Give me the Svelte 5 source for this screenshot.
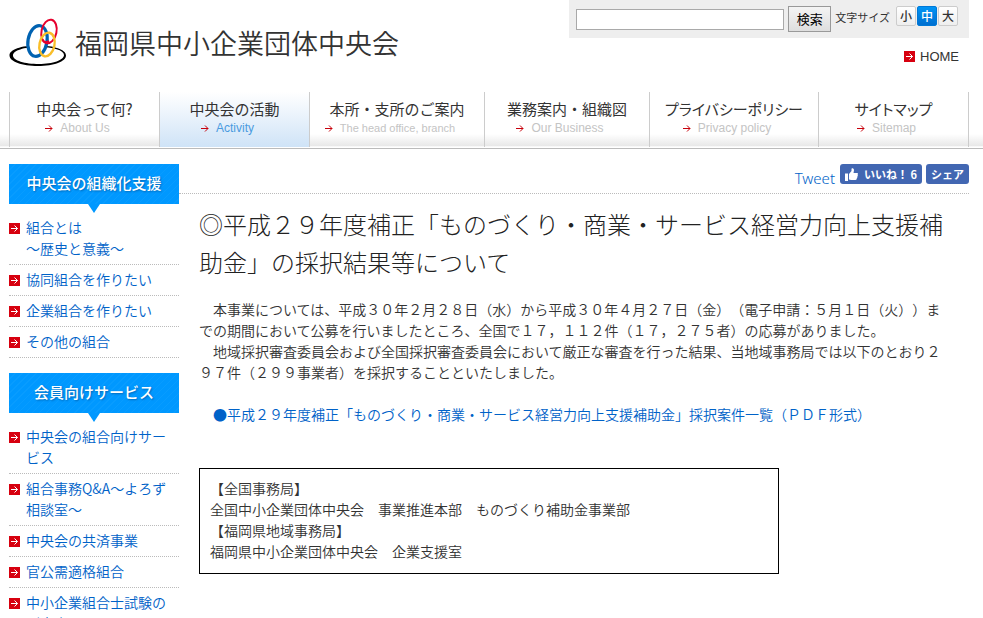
<script lang="ts">
  type NavItem = { label: string; sub: string; active?: boolean; kana?: boolean; long?: boolean };
  type MenuGroup = { title: string; items: string[][] };

  const navItems: NavItem[] = [
    { label: "中央会って何?", sub: "About Us" },
    { label: "中央会の活動", sub: "Activity", active: true },
    { label: "本所・支所のご案内", sub: "The head office, branch", long: true },
    { label: "業務案内・組織図", sub: "Our Business" },
    { label: "プライバシーポリシー", sub: "Privacy policy", kana: true },
    { label: "サイトマップ", sub: "Sitemap", kana: true },
  ];

  const groups: MenuGroup[] = [
    {
      title: "中央会の組織化支援",
      items: [["組合とは", "～歴史と意義～"], ["協同組合を作りたい"], ["企業組合を作りたい"], ["その他の組合"]],
    },
    {
      title: "会員向けサービス",
      items: [
        ["中央会の組合向けサービス"],
        ["組合事務Q&A～よろず相談室～"],
        ["中央会の共済事業"],
        ["官公需適格組合"],
        ["中小企業組合士試験のご案内"],
      ],
    },
  ];

  const sizes = ["小", "中", "大"];
  let size = $state("中");
  let keyword = $state("");
</script>

{#snippet redBox()}
  <svg class="red-box" width="11" height="11" viewBox="0 0 11 11" aria-hidden="true">
    <rect width="11" height="11" fill="#d7000f" />
    <path d="M2 5.5h6.5M5.5 2.5l3 3-3 3" fill="none" stroke="#fff" />
  </svg>
{/snippet}

<header class="header">
  <a class="logo" href="#top">
    <svg width="58" height="50" viewBox="0 0 58 50" aria-hidden="true">
      <path
        fill-rule="evenodd"
        fill="#000"
        d="M28.500 27.500C12 27.500 .500 31.500 .500 37.500S13 48 29 48S57 43.500 57 37.500S45 27.500 28.500 27.500ZM29.500 29C44 29 55 32 55 37S44 46 30 46S4 42.500 4 37.500S15 29 29.500 29Z"
      />
      <ellipse cx="28.500" cy="23" rx="10.500" ry="17" fill="#fff" transform="rotate(10 28.500 23)" />
      <ellipse cx="28.500" cy="23" rx="9.500" ry="15.500" fill="none" stroke="#0062b1" stroke-width="3.200" transform="rotate(10 28.500 23)" />
      <ellipse cx="40" cy="13.500" rx="7.500" ry="12" fill="none" stroke="#e6002d" stroke-width="2" transform="rotate(12 40 13.500)" />
      <ellipse cx="38" cy="26.500" rx="7.500" ry="12" fill="none" stroke="#f9be28" stroke-width="2.400" transform="rotate(12 38 26.500)" />
      <path d="M33.500 21.500c1 2.800 4 3 6.500 1.500" fill="none" stroke="#e6002d" stroke-width="2" />
    </svg>
    <span>福岡県中小企業団体中央会</span>
  </a>
  <div class="tools">
    <form class="search" onsubmit={(e) => e.preventDefault()}>
      <input type="text" aria-label="検索" bind:value={keyword} />
      <button class="submit" type="submit">検索</button>
      <span class="size-label">文字サイズ</span>
      <div class="sizes">
        {#each sizes as s}
          <button type="button" class:active={size === s} onclick={() => (size = s)}>{s}</button>
        {/each}
      </div>
    </form>
    <a class="home" href="#home">{@render redBox()}HOME</a>
  </div>
</header>

<nav class="nav">
  <ul>
    {#each navItems as item}
      <li class:active={item.active}>
        <a href="#nav">
          <span class="label" class:kana={item.kana}>{item.label}</span>
          <span class="sub" class:long={item.long}>
            <svg width="8" height="7" viewBox="0 0 8 7" aria-hidden="true">
              <path d="M0 3.500h7M4 .500l3 3-3 3" fill="none" stroke="#c7000b" />
            </svg>
            {item.sub}
          </span>
        </a>
      </li>
    {/each}
  </ul>
</nav>

<div class="page">
  <aside class="side">
    {#each groups as group}
      <section>
        <h2>{group.title}</h2>
        <ul>
          {#each group.items as lines}
            <li>
              {@render redBox()}
              <a href="#menu">{#each lines as line, i}{#if i > 0}<br />{/if}{line}{/each}</a>
            </li>
          {/each}
        </ul>
      </section>
    {/each}
  </aside>

  <main class="main">
    <div class="social">
      <a class="tweet" href="#tweet">Tweet</a>
      <button type="button">
        <svg width="13" height="13" viewBox="0 0 13 13" aria-hidden="true">
          <path fill="#fff" d="M0 5.500h3V13H0zM4 6l2.500-3V.800C6.500 0 9 0 9 2.200L8.500 5H12c1 0 1.300 1.200.500 1.800.600.600.400 1.500-.300 1.900.4.700.1 1.400-.5 1.700.2.900-.2 1.600-1.200 1.600H6L4 11.500z" />
        </svg>
        いいね！ 6
      </button>
      <button type="button">シェア</button>
    </div>

    <article>
      <h1>◎平成２９年度補正「ものづくり・商業・サービス経営力向上支援補助金」の採択結果等について</h1>
      <p>
        &#12288;本事業については、平成３０年２月２８日（水）から平成３０年４月２７日（金）（電子申請：５月１日（火））までの期間において公募を行いましたところ、全国で１７，１１２件（１７，２７５者）の応募がありました。<br />
        &#12288;地域採択審査委員会および全国採択審査委員会において厳正な審査を行った結果、当地域事務局では以下のとおり２９７件（２９９事業者）を採択することといたしました。
      </p>
      <p class="pdf">
        &#12288;<a href="#pdf">●平成２９年度補正「ものづくり・商業・サービス経営力向上支援補助金」採択案件一覧（ＰＤＦ形式）</a>
      </p>
      <div class="contact">
        【全国事務局】<br />
        全国中小企業団体中央会&#12288;事業推進本部&#12288;ものづくり補助金事業部<br />
        【福岡県地域事務局】<br />
        福岡県中小企業団体中央会&#12288;企業支援室
      </div>
    </article>
  </main>
</div>

<style>
  :global(body) {
    margin: 0;
    background: #fff;
    color: #333;
    font-family: "Noto Sans CJK JP", sans-serif;
    font-size: 14px;
    font-weight: 350;
    line-height: 21px;
    text-spacing-trim: space-all;
  }

  a {
    color: #0062c8;
    text-decoration: none;
  }

  ul {
    list-style: none;
    margin: 0;
    padding: 0;
  }

  button,
  input {
    box-sizing: border-box;
    font-family: inherit;
  }

  .header {
    display: flex;
    justify-content: space-between;
    align-items: flex-start;
    padding: 0 14px 0 9px;
    height: 92px;
  }

  .logo {
    display: flex;
    align-items: center;
    gap: 8px;
    margin-top: 18px;
    color: #333;
    font-size: 27px;
    line-height: 50px;
  }

  .tools {
    display: flex;
    flex-direction: column;
    align-items: flex-end;
  }

  .search {
    box-sizing: border-box;
    display: flex;
    align-items: center;
    width: 400px;
    height: 38px;
    padding: 0 11px 0 7px;
    background: #eee;
  }

  .search input {
    flex: 1;
    min-width: 0;
    height: 21px;
    padding: 1px 4px;
    border: 1px solid #a9a9a9;
    background: #fff;
  }

  .submit {
    width: 43px;
    height: 26px;
    margin: 0 4px;
    padding: 0;
    border: 1px solid #999;
    background: linear-gradient(#f4f4f4, #dedede);
    color: #000;
    font-size: 13px;
    line-height: 20px;
  }

  .size-label {
    padding-bottom: 4px;
    font-size: 11px;
    font-weight: 400;
  }

  .sizes {
    display: flex;
    gap: 1px;
    margin: 0 0 6px 6px;
  }

  .sizes button {
    width: 20px;
    height: 20px;
    padding: 0;
    border: 1px solid #ccc;
    border-radius: 2px;
    background: linear-gradient(#fff, #eee);
    color: #333;
    font-size: 12px;
    font-weight: 500;
    line-height: 16px;
  }

  .sizes button.active {
    border-color: #0078d7;
    background: linear-gradient(#0094f5, #006fd0);
    color: #fff;
  }

  .home {
    display: flex;
    align-items: center;
    gap: 5px;
    margin: 8px 10px 0 0;
    color: #333;
    font-family: "Liberation Sans", Arial, sans-serif;
    font-size: 13px;
  }

  .nav {
    padding: 0 14px 0 9px;
    border-bottom: 1px solid #bbb;
    background: linear-gradient(#fff 75%, #e8e8e8 96%, #fff 98%);
  }

  .nav ul {
    display: grid;
    grid-template-columns: 150fr 150fr 175fr 165fr 169fr 151fr;
    height: 56px;
  }

  .nav li {
    height: 55px;
    border-left: 1px solid #ccc;
  }

  .nav li:last-child {
    border-right: 1px solid #ccc;
  }

  .nav li.active {
    background: linear-gradient(#fff, #cfe3f7);
  }

  .nav a {
    display: flex;
    flex-direction: column;
    align-items: center;
    padding-top: 6px;
    color: #333;
    font-weight: 400;
  }

  .label {
    font-size: 15px;
  }

  .label.kana {
    font-feature-settings: "palt";
  }

  .sub {
    display: flex;
    align-items: center;
    gap: 7px;
    padding-right: 14px;
    color: #c4c4c4;
    font-family: "Liberation Sans", Arial, sans-serif;
    font-size: 12px;
    line-height: 18px;
  }

  .sub.long {
    font-size: 11px;
  }

  .active .sub {
    color: #4a9be0;
  }

  .page {
    display: flex;
    padding: 15px 14px 0 9px;
  }

  .side {
    flex: none;
    width: 170px;
  }

  .side section {
    margin-bottom: 15px;
  }

  .side h2 {
    position: relative;
    margin: 0 0 9px;
    background: repeating-linear-gradient(135deg, #0098ff 0 4px, #089cff 4px 5px);
    color: #fff;
    font-size: 15px;
    font-weight: 500;
    line-height: 38px;
    height: 40px;
    text-align: center;
    text-shadow: 1px 1px 2px #0068b8;
  }

  .side h2::after {
    content: "";
    position: absolute;
    top: 100%;
    left: 50%;
    margin-left: -6px;
    border: 6px solid transparent;
    border-top: 9px solid #0098ff;
    border-bottom: 0;
  }

  .side li {
    display: flex;
    gap: 6px;
    padding: 4px 0 5px;
    border-bottom: 1px dotted #bbb;
  }

  .side li .red-box {
    margin-top: 6px;
  }

  .red-box {
    flex: none;
  }

  .side li a {
    flex: 1;
    min-width: 0;
  }

  .main {
    flex: 1;
    min-width: 0;
  }

  .social {
    display: flex;
    justify-content: flex-end;
    gap: 4px;
    height: 29px;
    border-bottom: 1px dotted #bbb;
  }

  .tweet {
    margin-right: 1px;
    font-family: "Noto Sans", sans-serif;
    font-size: 15px;
    line-height: 28px;
  }

  .social button {
    display: flex;
    align-items: center;
    gap: 6px;
    height: 20px;
    padding: 0 5px;
    border: 0;
    border-radius: 3px;
    background: #4267b2;
    color: #fff;
    font-size: 11px;
    font-weight: 700;
    line-height: 18px;
  }

  article {
    padding: 11px 20px 0;
  }

  h1 {
    margin: 0 0 18px;
    color: #222;
    font-size: 24px;
    font-weight: 300;
    line-height: 38px;
  }

  p {
    margin: 0;
  }

  .pdf {
    margin: 21px 0 43px;
  }

  .contact {
    box-sizing: border-box;
    max-width: 580px;
    padding: 9px 10px 11px;
    border: 1px solid #000;
  }
</style>
